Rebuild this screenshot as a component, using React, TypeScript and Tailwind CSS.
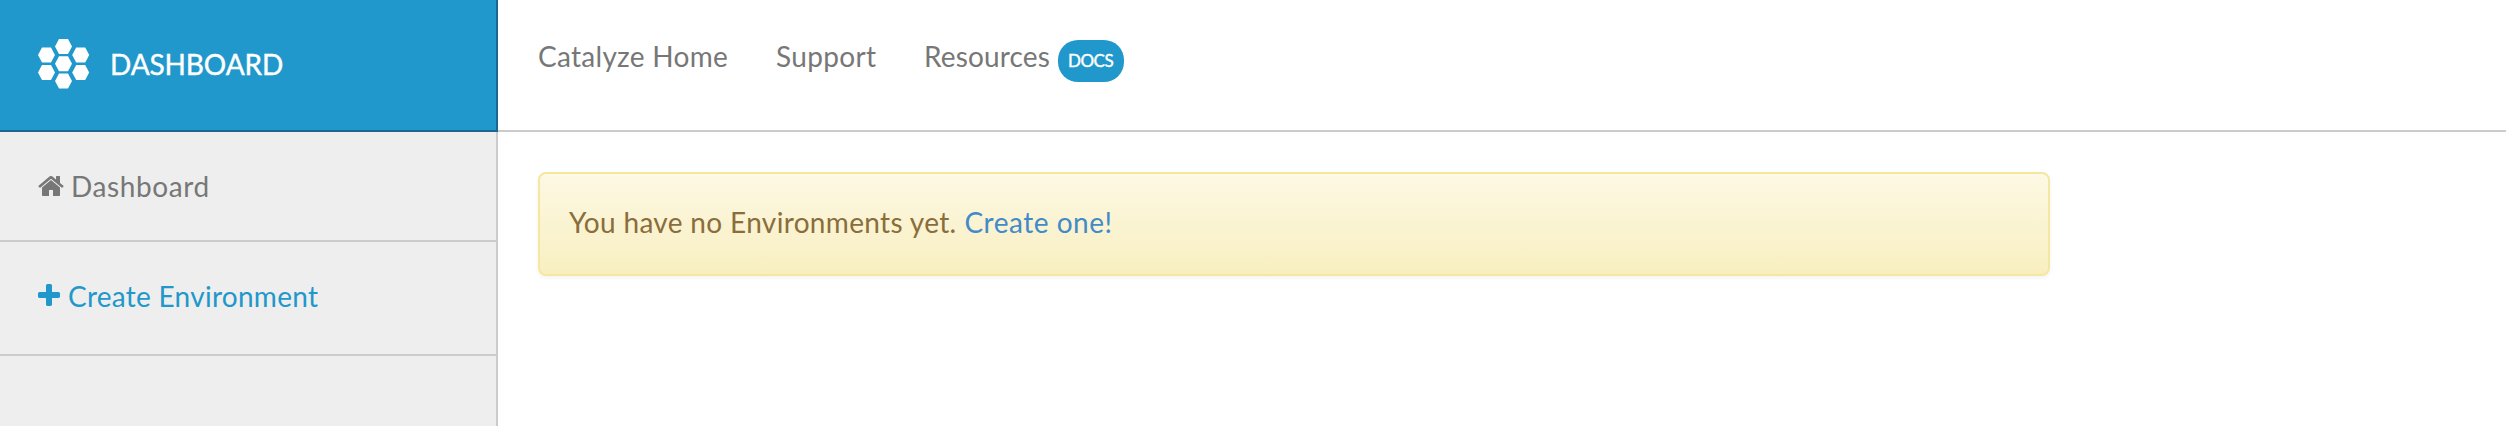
const hexCenters = [
  [25.5, 8.5],
  [8.5, 17],
  [42.7, 17],
  [25.5, 25.7],
  [8.5, 34.4],
  [42.7, 34.4],
  [25.5, 43],
];

function HexLogo() {
  return (
    <svg className="h-[52px] w-[52px] shrink-0" viewBox="0 0 52 52" fill="#fff" aria-hidden="true">
      {hexCenters.map(([x, y]) => (
        <path key={`${x}-${y}`} transform={`translate(${x} ${y})`} d="M-8.5 0L-4.5-7.5H4.5L8.5 0L4.5 7.5H-4.5Z" />
      ))}
    </svg>
  );
}

function HomeIcon() {
  return (
    <svg className="h-7 w-7 shrink-0" viewBox="0 0 1792 1792" fill="currentColor" aria-hidden="true">
      <path d="M1472 992v480q0 26-19 45t-45 19h-384v-384h-256v384h-384q-26 0-45-19t-19-45v-480q0-1 .5-3t.5-3l575-474 575 474q1 2 1 6zm223-69l-62 74q-8 9-21 11h-3q-13 0-21-7l-692-577-692 577q-12 8-24 7-13-2-21-11l-62-74q-8-10-7-23.5t11-21.5l719-599q32-26 76-26t76 26l244 204v-195q0-14 9-23t23-9h192q14 0 23 9t9 23v408l219 182q10 8 11 21.5t-7 23.5z" />
    </svg>
  );
}

function PlusIcon() {
  return (
    <svg className="h-7 w-7 shrink-0" viewBox="0 0 1792 1792" fill="currentColor" aria-hidden="true">
      <path d="M1600 736v192q0 40-28 68t-68 28h-416v416q0 40-28 68t-68 28h-192q-40 0-68-28t-28-68v-416h-416q-40 0-68-28t-28-68v-192q0-40 28-68t68-28h416v-416q0-40 28-68t68-28h192q40 0 68 28t28 68v416h416q40 0 68 28t28 68z" />
    </svg>
  );
}

function Sidebar() {
  return (
    <aside className="flex w-[498px] shrink-0 flex-col">
      <div className="flex h-[132px] items-start border-r-2 border-b-2 border-[#1b6790] bg-[#2198cb] pt-[38px] pl-[38px] text-white">
        <HexLogo />
        <span className="mt-[6px] ml-5 leading-10 tracking-[-0.1px] [-webkit-text-stroke:0.4px_white]">DASHBOARD</span>
      </div>
      <nav className="flex grow flex-col border-r-2 border-[#cbcbcb] bg-[#eeeeee]">
        <a className="flex h-[110px] items-start border-b-2 border-[#cbcbcb] pt-[34px] pl-[37px] text-[#777777]">
          <span className="pt-[6px]"><HomeIcon /></span>
          <span className="ml-[6px] leading-10 tracking-[0.6px]">Dashboard</span>
        </a>
        <a className="flex h-[114px] items-start border-b-2 border-[#cbcbcb] pt-[34px] pl-[35px] text-[#2198cb]">
          <span className="pt-[6px]"><PlusIcon /></span>
          <span className="ml-[5px] leading-10 tracking-[0.27px]">Create Environment</span>
        </a>
      </nav>
    </aside>
  );
}

function TopNav() {
  return (
    <header className="flex h-[132px] items-start border-b-2 border-[#cbcbcb] pt-9 pl-10 leading-10 text-[#777777]">
      <a className="w-[238px] tracking-[0.28px]">Catalyze Home</a>
      <a className="w-[148px] tracking-[0.33px]">Support</a>
      <a className="flex">
        <span className="w-[134px] tracking-[0.15px]">Resources</span>
        <span className="mt-1 h-[42px] w-[66px] rounded-[20px] bg-[#2198cb] pl-[10px] text-[17px] leading-[41px] tracking-[-0.5px] text-white [-webkit-text-stroke:0.4px_white]">
          DOCS
        </span>
      </a>
    </header>
  );
}

export default function App() {
  return (
    <div className="flex h-[426px] w-full overflow-hidden bg-white font-['Lato',sans-serif] text-[28px] whitespace-nowrap">
      <Sidebar />
      <div className="flex grow flex-col">
        <TopNav />
        <main className="pt-10 pl-10">
          <div className="h-[104px] w-[1512px] rounded-lg border-2 border-[#f5e79e] bg-linear-to-b from-[#fdf8e4] to-[#f8efc0] pt-7 pl-[29px] leading-10 text-[#8a6d3b] shadow-[inset_0_2px_0_rgba(255,255,255,0.25),0_2px_4px_rgba(0,0,0,0.05)]">
            <span className="tracking-[0.34px]">You have no Environments yet.</span>
            <a className="ml-[8px] tracking-[0.5px] text-[#428bca]">Create one!</a>
          </div>
        </main>
      </div>
    </div>
  );
}
